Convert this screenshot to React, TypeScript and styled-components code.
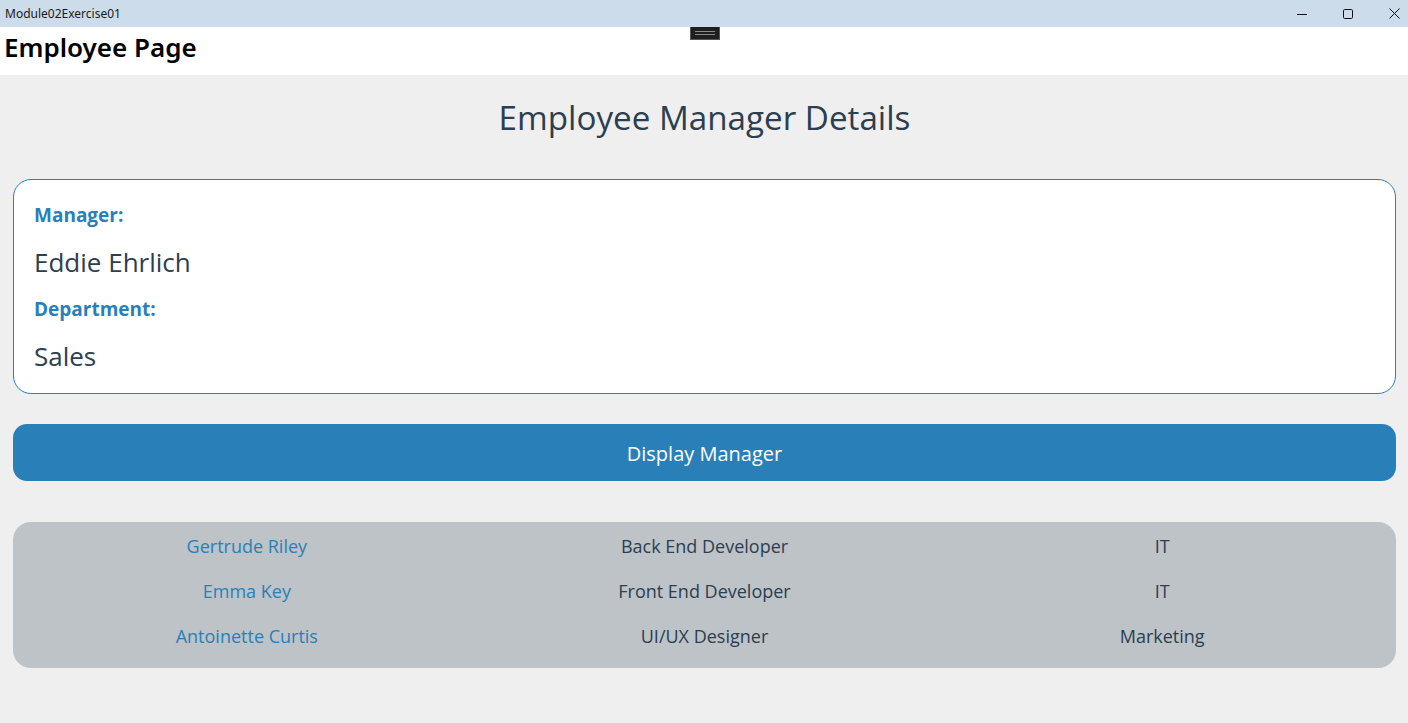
import React from "react";
import styled, { createGlobalStyle } from "styled-components";

const Global = createGlobalStyle`
  html, body { margin: 0; padding: 0; }
  body { background: #efefef; font-family: "Open Sans", "Noto Sans", sans-serif; }
  * { box-sizing: border-box; }
`;

const Window = styled.div`
  width: 1408px;
  height: 723px;
  display: flex;
  flex-direction: column;
  overflow: hidden;
  background: #efefef;
`;

const TitleBar = styled.div`
  height: 27px;
  background: #ccdcea;
  display: flex;
  align-items: center;
  justify-content: space-between;
  padding-left: 5px;
  font-family: "Noto Sans", sans-serif;
  font-size: 12px;
  color: #1a1a1a;
`;

const Controls = styled.div`
  display: flex;
  height: 100%;
  margin-right: -9px;
`;

const ControlButton = styled.div`
  width: 46px;
  height: 100%;
  display: flex;
  align-items: center;
  justify-content: center;
`;

const Header = styled.div`
  height: 48px;
  background: #ffffff;
  position: relative;
  display: flex;
  align-items: center;
  padding: 0 0 8px 4px;
`;

const HeaderTitle = styled.h1`
  margin: 0;
  font-family: "Noto Sans", sans-serif;
  font-weight: 600;
  font-size: 26px;
  color: #000;
  letter-spacing: 0;
`;

const DragHandle = styled.div`
  position: absolute;
  left: 690px;
  top: 0;
  width: 30px;
  height: 13px;
  background: #1f1f1f;
  border: 1px solid #555;
  border-top: none;
  display: flex;
  flex-direction: column;
  align-items: center;
  justify-content: center;
  gap: 2px;
`;

const HandleLine = styled.div`
  width: 20px;
  height: 1px;
  background: #8a8a8a;
`;

const Content = styled.main`
  flex: 1;
  display: flex;
  flex-direction: column;
  padding: 0 12px 0 13px;
`;

const PageTitle = styled.h2`
  margin: 23px 0 0;
  height: 40px;
  text-align: center;
  font-weight: 400;
  font-size: 33.2px;
  line-height: 40px;
  color: #2c3e50;
`;

const Card = styled.section`
  margin-top: 41px;
  height: 215px;
  background: #ffffff;
  border: 1px solid #2980b9;
  border-radius: 18px;
  padding: 20px 20px 0;
  display: flex;
  flex-direction: column;
`;

const Label = styled.div`
  font-weight: 700;
  font-size: 19px;
  line-height: 30px;
  height: 30px;
  color: #2980b9;
`;

const Value = styled.div`
  font-size: 26px;
  line-height: 36px;
  height: 64px;
  padding-top: 14px;
  color: #2c3e50;
`;

const ActionButton = styled.button`
  margin-top: 30px;
  height: 57px;
  border: none;
  border-radius: 14px;
  background: #2980b9;
  color: #ffffff;
  font-family: "Open Sans", sans-serif;
  font-size: 20px;
  padding-top: 2px;
  cursor: pointer;
`;

const Grid = styled.div`
  margin-top: 41px;
  height: 146px;
  background: #bdc3c7;
  border-radius: 18px;
  padding: 10px 5px 0;
  display: grid;
  grid-template-columns: repeat(3, 1fr);
  grid-auto-rows: 45px;
  align-content: start;
`;

const Cell = styled.div<{ $accent?: boolean }>`
  text-align: center;
  font-size: 18px;
  line-height: 28px;
  color: ${(p) => (p.$accent ? "#2980b9" : "#2c3e50")};
`;

const employees = [
  { name: "Gertrude Riley", role: "Back End Developer", dept: "IT" },
  { name: "Emma Key", role: "Front End Developer", dept: "IT" },
  { name: "Antoinette Curtis", role: "UI/UX Designer", dept: "Marketing" },
];

export default function App() {
  return (
    <Window>
      <Global />
      <TitleBar>
        <span>Module02Exercise01</span>
        <Controls>
          <ControlButton>
            <svg width="10" height="10" viewBox="0 0 10 10">
              <line x1="0" y1="5.5" x2="10" y2="5.5" stroke="#111" strokeWidth="1" />
            </svg>
          </ControlButton>
          <ControlButton>
            <svg width="10" height="10" viewBox="0 0 10 10">
              <rect x="0.5" y="0.5" width="9" height="9" rx="1.2" fill="none" stroke="#111" strokeWidth="1" />
            </svg>
          </ControlButton>
          <ControlButton>
            <svg width="11" height="11" viewBox="0 0 11 11">
              <path d="M0.5 0.5 L10.5 10.5 M10.5 0.5 L0.5 10.5" stroke="#111" strokeWidth="1" />
            </svg>
          </ControlButton>
        </Controls>
      </TitleBar>
      <Header>
        <HeaderTitle>Employee Page</HeaderTitle>
        <DragHandle>
          <HandleLine />
          <HandleLine />
        </DragHandle>
      </Header>
      <Content>
        <PageTitle>Employee Manager Details</PageTitle>
        <Card>
          <Label>Manager:</Label>
          <Value>Eddie Ehrlich</Value>
          <Label>Department:</Label>
          <Value>Sales</Value>
        </Card>
        <ActionButton>Display Manager</ActionButton>
        <Grid>
          {employees.map((e) => (
            <React.Fragment key={e.name}>
              <Cell $accent>{e.name}</Cell>
              <Cell>{e.role}</Cell>
              <Cell>{e.dept}</Cell>
            </React.Fragment>
          ))}
        </Grid>
      </Content>
    </Window>
  );
}
